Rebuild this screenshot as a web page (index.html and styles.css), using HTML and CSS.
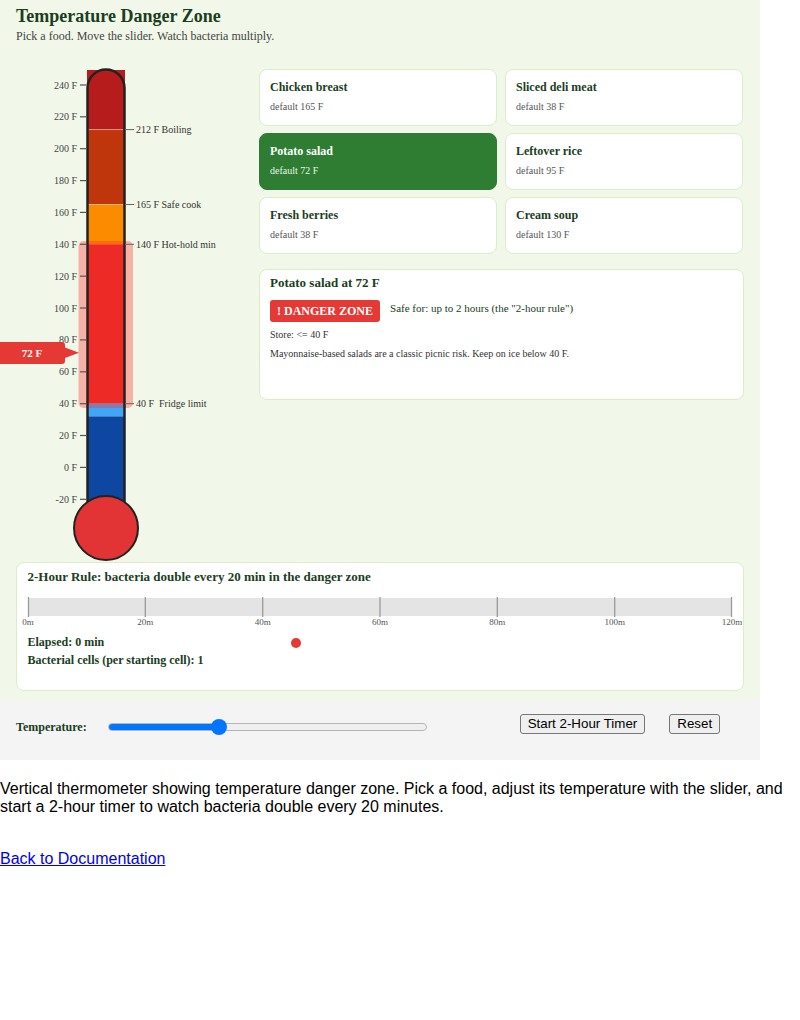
FILE: index.html
```html
<!DOCTYPE html>
<html lang="en">
<head>
<meta charset="utf-8">
<title>Temperature Danger Zone</title>
<link rel="stylesheet" href="styles.css">
</head>
<body>
<div class="app">
  <div class="stage">
    <header class="head">
      <h1>Temperature Danger Zone</h1>
      <p>Pick a food. Move the slider. Watch bacteria multiply.</p>
    </header>

    <div class="main">
      <!-- thermometer: y(T) = 467.4 - 1.5935*T in page coordinates -->
      <svg class="thermo" width="259" height="500" viewBox="0 62 259 500">
        <!-- column fill, hottest at the top -->
        <rect x="87" y="70" width="38" height="59.6" fill="#b71c1c"/>
        <rect x="87" y="129.6" width="38" height="74.9" fill="#bf360c"/>
        <rect x="87" y="204.5" width="38" height="39.8" fill="#fb8c00"/>
        <rect x="87" y="244.3" width="38" height="159.4" fill="#e52725"/>
        <rect x="87" y="403.7" width="38" height="12.7" fill="#42a5f5"/>
        <rect x="87" y="416.4" width="38" height="100" fill="#0d47a1"/>
        <line x1="87" y1="129.6" x2="125" y2="129.6" class="seam"/>
        <line x1="87" y1="204.5" x2="125" y2="204.5" class="seam"/>

        <!-- danger zone band 40..140 F -->
        <rect x="78.5" y="241" width="54.5" height="167" rx="5" class="band"/>

        <!-- tube outline and bulb -->
        <path d="M87.5 506 V88 A18.5 18.5 0 0 1 124.5 88 V506" class="tube"/>
        <circle cx="106" cy="528" r="32" class="bulb"/>

        <!-- scale -->
        <g class="ticks">
          <line x1="80" y1="85" x2="86" y2="85"/>
          <line x1="80" y1="116.8" x2="86" y2="116.8"/>
          <line x1="80" y1="148.7" x2="86" y2="148.7"/>
          <line x1="80" y1="180.6" x2="86" y2="180.6"/>
          <line x1="80" y1="212.4" x2="86" y2="212.4"/>
          <line x1="80" y1="244.3" x2="86" y2="244.3"/>
          <line x1="80" y1="276.2" x2="86" y2="276.2"/>
          <line x1="80" y1="308" x2="86" y2="308"/>
          <line x1="80" y1="339.9" x2="86" y2="339.9"/>
          <line x1="80" y1="371.8" x2="86" y2="371.8"/>
          <line x1="80" y1="403.7" x2="86" y2="403.7"/>
          <line x1="80" y1="435.5" x2="86" y2="435.5"/>
          <line x1="80" y1="467.4" x2="86" y2="467.4"/>
          <line x1="80" y1="499.3" x2="86" y2="499.3"/>
        </g>
        <g class="scale">
          <text x="77" y="88.5">240 F</text>
          <text x="77" y="120.3">220 F</text>
          <text x="77" y="152.2">200 F</text>
          <text x="77" y="184.1">180 F</text>
          <text x="77" y="215.9">160 F</text>
          <text x="77" y="247.8">140 F</text>
          <text x="77" y="279.7">120 F</text>
          <text x="77" y="311.5">100 F</text>
          <text x="77" y="343.4">80 F</text>
          <text x="77" y="375.3">60 F</text>
          <text x="77" y="407.2">40 F</text>
          <text x="77" y="439">20 F</text>
          <text x="77" y="470.9">0 F</text>
          <text x="77" y="502.8">-20 F</text>
        </g>

        <!-- reference marks -->
        <g class="marks">
          <line x1="125" y1="129.6" x2="134" y2="129.6"/>
          <line x1="125" y1="204.5" x2="134" y2="204.5"/>
          <line x1="125" y1="244.3" x2="134" y2="244.3"/>
          <line x1="125" y1="403.7" x2="134" y2="403.7"/>
        </g>
        <g class="mark-labels">
          <text x="136" y="133.1">212 F Boiling</text>
          <text x="136" y="208">165 F Safe cook</text>
          <text x="136" y="247.8">140 F Hot-hold min</text>
          <text x="136" y="407.2">40 F&#160; Fridge limit</text>
        </g>

        <!-- current temperature pointer -->
        <path d="M0 342 H62 Q65 342 65 345 V347.5 L79 352.7 L65 358 V361 Q65 364 62 364 H0 Z" class="pointer"/>
        <text x="32" y="356.8" class="pointer-label">72 F</text>
      </svg>

      <div class="side">
        <div class="foods">
          <div class="food">
            <div class="food-name">Chicken breast</div>
            <div class="food-temp">default 165 F</div>
          </div>
          <div class="food">
            <div class="food-name">Sliced deli meat</div>
            <div class="food-temp">default 38 F</div>
          </div>
          <div class="food is-active">
            <div class="food-name">Potato salad</div>
            <div class="food-temp">default 72 F</div>
          </div>
          <div class="food">
            <div class="food-name">Leftover rice</div>
            <div class="food-temp">default 95 F</div>
          </div>
          <div class="food">
            <div class="food-name">Fresh berries</div>
            <div class="food-temp">default 38 F</div>
          </div>
          <div class="food">
            <div class="food-name">Cream soup</div>
            <div class="food-temp">default 130 F</div>
          </div>
        </div>

        <div class="info">
          <div class="info-title">Potato salad at 72 F</div>
          <div class="status-row">
            <span class="badge">! DANGER ZONE</span>
            <span class="safe">Safe for: up to 2 hours (the "2-hour rule")</span>
          </div>
          <div class="store">Store: &lt;= 40 F</div>
          <div class="note">Mayonnaise-based salads are a classic picnic risk. Keep on ice below 40 F.</div>
        </div>
      </div>
    </div>

    <section class="timeline">
      <div class="timeline-title">2-Hour Rule: bacteria double every 20 min in the danger zone</div>
      <svg class="track" width="704" height="32" viewBox="0 0 704 32">
        <rect x="0" y="2" width="704" height="18" fill="#e4e4e4"/>
        <g class="track-ticks">
          <line x1="0.5" y1="1" x2="0.5" y2="21"/>
          <line x1="117.3" y1="1" x2="117.3" y2="21"/>
          <line x1="234.7" y1="1" x2="234.7" y2="21"/>
          <line x1="352" y1="1" x2="352" y2="21"/>
          <line x1="469.3" y1="1" x2="469.3" y2="21"/>
          <line x1="586.7" y1="1" x2="586.7" y2="21"/>
          <line x1="703.5" y1="1" x2="703.5" y2="21"/>
        </g>
        <g class="track-labels">
          <text x="0" y="28.5">0m</text>
          <text x="117.3" y="28.5">20m</text>
          <text x="234.7" y="28.5">40m</text>
          <text x="352" y="28.5">60m</text>
          <text x="469.3" y="28.5">80m</text>
          <text x="586.7" y="28.5">100m</text>
          <text x="704" y="28.5">120m</text>
        </g>
      </svg>
      <div class="stats">
        <div class="stat-row"><span class="stat-text">Elapsed: 0 min</span><span class="dot"></span></div>
        <div class="stat-row"><span class="stat-text">Bacterial cells (per starting cell): 1</span></div>
      </div>
    </section>
  </div>

  <div class="controls">
    <label class="temp-label" for="temp">Temperature:</label>
    <input id="temp" class="temp-slider" type="range" min="-20" max="250" value="72" style="--fill: 35%">
    <button class="btn btn-start" type="button">Start 2-Hour Timer</button>
    <button class="btn btn-reset" type="button">Reset</button>
  </div>
</div>

<p class="desc">Vertical thermometer showing temperature danger zone. Pick a food, adjust its temperature with the slider, and start a 2-hour timer to watch bacteria double every 20 minutes.</p>
<div class="back"><a href="#">Back to Documentation</a></div>
</body>
</html>
```

FILE: styles.css
```css
html, body {
  margin: 0;
  padding: 0;
  background: #ffffff;
}

body {
  font-family: "Liberation Sans", Arial, sans-serif;
  font-size: 16px;
  color: #000;
}

.app {
  width: 760px;
  font-family: "Liberation Serif", "Times New Roman", serif;
}

/* ---------- green stage ---------- */
.stage {
  height: 700px;
  background: #f1f8e9;
  box-sizing: border-box;
  padding-top: 5px;
}

.head {
  padding: 0 16px;
}

.head h1 {
  margin: 0;
  font-size: 18px;
  line-height: 22px;
  font-weight: bold;
  color: #1b3d1f;
}

.head p {
  margin: 2px 0 0;
  font-size: 12px;
  line-height: 14px;
  color: #444;
}

.main {
  display: flex;
  margin-top: 19px;
  height: 500px;
}

.thermo {
  display: block;
  flex: none;
  overflow: visible;
}

.seam {
  stroke: rgba(255, 255, 255, 0.35);
  stroke-width: 1;
}

.band {
  fill: rgb(255, 48, 42);
  opacity: 0.35;
}

.tube {
  fill: none;
  stroke: #222;
  stroke-width: 2.5;
}

.bulb {
  fill: #e23434;
  stroke: #222;
  stroke-width: 2;
}

.ticks line {
  stroke: #555;
  stroke-width: 1.2;
}

.scale text {
  font-family: "Liberation Serif", serif;
  font-size: 10px;
  fill: #444;
  text-anchor: end;
}

.marks line {
  stroke: #666;
  stroke-width: 1;
}

.mark-labels text {
  font-family: "Liberation Serif", serif;
  font-size: 10px;
  fill: #333;
}

.pointer {
  fill: #e53935;
}

.pointer-label {
  font-family: "Liberation Serif", serif;
  font-size: 11px;
  font-weight: bold;
  fill: #fff;
  text-anchor: middle;
}

/* ---------- food picker ---------- */
.side {
  width: 485px;
  padding-top: 7px;
}

.foods {
  display: grid;
  grid-template-columns: 238px 238px;
  column-gap: 8px;
  row-gap: 7px;
}

.food {
  height: 57px;
  box-sizing: border-box;
  background: #fff;
  border: 1.5px solid #dcedc8;
  border-radius: 8px;
  padding: 10px 10px 0;
}

.food-name {
  font-size: 12px;
  line-height: 14px;
  font-weight: bold;
  color: #1b3d1f;
}

.food-temp {
  margin-top: 6.5px;
  font-size: 10px;
  line-height: 12px;
  color: #555;
}

.food.is-active {
  background: #2e7d32;
  border-color: #2e7d32;
}

.food.is-active .food-name {
  color: #fff;
}

.food.is-active .food-temp {
  color: #e8f5e9;
}

.info {
  margin-top: 15px;
  height: 131px;
  box-sizing: border-box;
  background: #fff;
  border: 1.5px solid #dcedc8;
  border-radius: 8px;
  padding: 5px 10px 0;
}

.info-title {
  font-size: 13px;
  line-height: 16px;
  font-weight: bold;
  color: #1b3d1f;
}

.status-row {
  display: flex;
  align-items: center;
  gap: 10px;
  margin-top: 8.5px;
}

.badge {
  display: inline-block;
  height: 22px;
  line-height: 22px;
  padding: 0 7px;
  background: #e53935;
  color: #fff;
  font-size: 12px;
  font-weight: bold;
  border-radius: 3px;
}

.safe {
  font-size: 11px;
  color: #1b3d1f;
  margin-top: -6px;
}

.store {
  margin-top: 7.5px;
  font-size: 10px;
  line-height: 12px;
  color: #333;
}

.note {
  margin-top: 6.7px;
  font-size: 10px;
  line-height: 12px;
  color: #333;
}

/* ---------- 2-hour timeline ---------- */
.timeline {
  margin: 0 16px;
  height: 129px;
  box-sizing: border-box;
  background: #fff;
  border: 1.5px solid #dcedc8;
  border-radius: 8px;
  padding: 6px 10.5px 0;
}

.timeline-title {
  font-size: 13px;
  line-height: 16px;
  font-weight: bold;
  color: #1b3d1f;
}

.track {
  display: block;
  margin-top: 11px;
  overflow: visible;
}

.track-ticks line {
  stroke: #9a9a9a;
  stroke-width: 1.3;
}

.track-labels text {
  font-family: "Liberation Serif", serif;
  font-size: 9px;
  fill: #555;
  text-anchor: middle;
}

.stats {
  margin-top: 5.5px;
}

.stat-row {
  display: flex;
  align-items: center;
  height: 18px;
}

.stat-text {
  width: 263px;
  font-size: 12px;
  font-weight: bold;
  color: #1b3d1f;
}

.dot {
  width: 10px;
  height: 10px;
  border-radius: 50%;
  background: #e53935;
}

/* ---------- control bar ---------- */
.controls {
  height: 60px;
  background: #f4f4f4;
  display: flex;
  align-items: flex-start;
  padding-left: 16px;
  box-sizing: border-box;
}

.temp-label {
  margin-top: 20px;
  font-size: 12px;
  line-height: 14px;
  font-weight: bold;
  color: #1b3d1f;
}

.temp-slider {
  -webkit-appearance: none;
  appearance: none;
  margin: 23px 0 0 21px;
  width: 319px;
  height: 8px;
  border-radius: 4px;
  border: 1px solid #b5b5b5;
  box-sizing: border-box;
  background: linear-gradient(to right, #0075ff 0, #0075ff var(--fill), #efefef var(--fill), #efefef 100%);
  outline: none;
}

.temp-slider::-webkit-slider-thumb {
  -webkit-appearance: none;
  appearance: none;
  width: 16px;
  height: 16px;
  border-radius: 50%;
  background: #0075ff;
  border: none;
}

.btn {
  margin-top: 14px;
  height: 20px;
  padding: 0 7px;
  font-family: "Liberation Sans", Arial, sans-serif;
  font-size: 13.33px;
  line-height: 18px;
  color: #000;
  background: #efefef;
  border: 1px solid #767676;
  border-radius: 3px;
}

.btn-start {
  margin-left: 93px;
}

.btn-reset {
  margin-left: 24px;
}

/* ---------- page text ---------- */
.desc {
  margin: 20px 0 0;
  font-size: 16px;
  line-height: 18px;
}

.back {
  margin-top: 34px;
  line-height: 18px;
}

.back a {
  color: #0000ee;
}
```
